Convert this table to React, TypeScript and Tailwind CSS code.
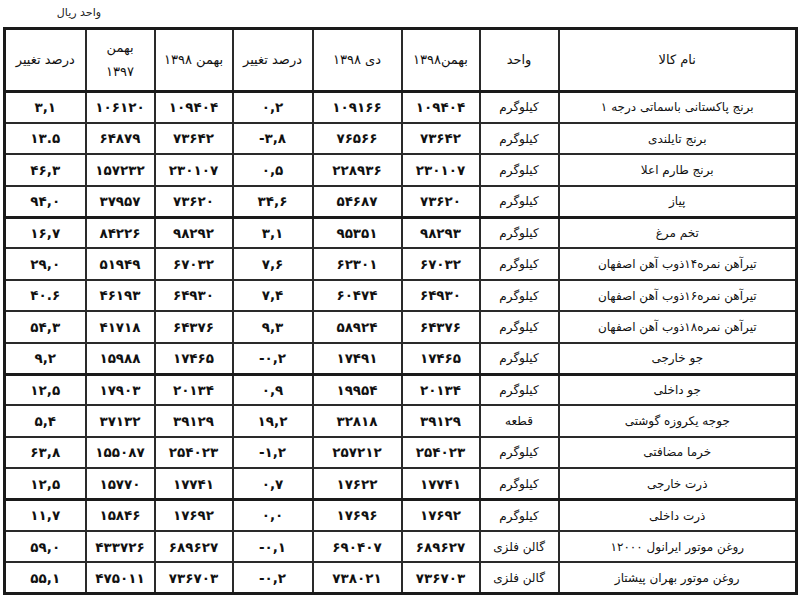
import React from "react";

type Row = [string, string, string, string, string, string, string, string];

const rows: Row[] = [
  ["برنج پاکستانی باسماتی درجه ۱", "کیلوگرم", "۱۰۹۴۰۴", "۱۰۹۱۶۶", "۰,۲", "۱۰۹۴۰۴", "۱۰۶۱۲۰", "۳,۱"],
  ["برنج تایلندی", "کیلوگرم", "۷۳۶۴۲", "۷۶۵۶۶", "-۳,۸", "۷۳۶۴۲", "۶۴۸۷۹", "۱۳.۵"],
  ["برنج طارم اعلا", "کیلوگرم", "۲۳۰۱۰۷", "۲۲۸۹۳۶", "۰,۵", "۲۳۰۱۰۷", "۱۵۷۲۳۲", "۴۶,۳"],
  ["پیاز", "کیلوگرم", "۷۳۶۲۰", "۵۴۶۸۷", "۳۴,۶", "۷۳۶۲۰", "۳۷۹۵۷", "۹۴,۰"],
  ["تخم مرغ", "کیلوگرم", "۹۸۲۹۳", "۹۵۳۵۱", "۳,۱", "۹۸۲۹۲", "۸۴۲۲۶", "۱۶,۷"],
  ["تیرآهن نمره۱۴ذوب آهن اصفهان", "کیلوگرم", "۶۷۰۳۲", "۶۲۳۰۱", "۷,۶", "۶۷۰۳۲", "۵۱۹۴۹", "۲۹,۰"],
  ["تیرآهن نمره۱۶ذوب آهن اصفهان", "کیلوگرم", "۶۴۹۳۰", "۶۰۴۷۴", "۷,۴", "۶۴۹۳۰", "۴۶۱۹۳", "۴۰.۶"],
  ["تیرآهن نمره۱۸ذوب آهن اصفهان", "کیلوگرم", "۶۴۳۷۶", "۵۸۹۲۴", "۹,۳", "۶۴۳۷۶", "۴۱۷۱۸", "۵۴,۳"],
  ["جو خارجی", "کیلوگرم", "۱۷۴۶۵", "۱۷۴۹۱", "-۰,۲", "۱۷۴۶۵", "۱۵۹۸۸", "۹,۲"],
  ["جو داخلی", "کیلوگرم", "۲۰۱۳۴", "۱۹۹۵۴", "۰,۹", "۲۰۱۳۴", "۱۷۹۰۳", "۱۲,۵"],
  ["جوجه یکروزه گوشتی", "قطعه", "۳۹۱۲۹", "۳۲۸۱۸", "۱۹,۲", "۳۹۱۲۹", "۳۷۱۳۲", "۵,۴"],
  ["خرما مضافتی", "کیلوگرم", "۲۵۴۰۲۳", "۲۵۷۲۱۲", "-۱,۲", "۲۵۴۰۲۳", "۱۵۵۰۸۷", "۶۳,۸"],
  ["ذرت خارجی", "کیلوگرم", "۱۷۷۴۱", "۱۷۶۲۲", "۰,۷", "۱۷۷۴۱", "۱۵۷۷۰", "۱۲,۵"],
  ["ذرت داخلی", "کیلوگرم", "۱۷۶۹۲", "۱۷۶۹۶", "۰,۰", "۱۷۶۹۲", "۱۵۸۴۶", "۱۱,۷"],
  ["روغن موتور ایرانول ۱۲۰۰۰", "گالن فلزی", "۶۸۹۶۲۷", "۶۹۰۴۰۷", "-۰,۱", "۶۸۹۶۲۷", "۴۳۳۷۲۶", "۵۹,۰"],
  ["روغن موتور بهران پیشتاز", "گالن فلزی", "۷۳۶۷۰۳", "۷۳۸۰۲۱", "-۰,۲", "۷۳۶۷۰۳", "۴۷۵۰۱۱", "۵۵,۱"],
];

const thickAfter = new Set([3, 8, 12]);

export default function App() {
  return (
    <div
      className="w-[800px] h-[600px] bg-white text-[#111] overflow-hidden"
      style={{ fontFamily: '"DejaVu Sans", sans-serif' }}
    >
      <div className="h-[27px] flex">
        <div className="w-[101px] flex justify-end items-start pt-[7px] text-[11px] leading-none text-[#222]">
          <span dir="rtl">واحد ریال</span>
        </div>
      </div>
      <table
        dir="rtl"
        className="ml-[3px] w-[794px] table-fixed border-collapse border-[3px] border-[#1a1a1a]"
      >
        <colgroup>
          <col className="w-[238px]" />
          <col className="w-[79px]" />
          <col className="w-[78px]" />
          <col className="w-[89px]" />
          <col className="w-[80px]" />
          <col className="w-[78px]" />
          <col className="w-[69px]" />
          <col className="w-[81px]" />
        </colgroup>
        <thead>
          <tr className="h-[63px] border-b-[3px] border-[#1a1a1a] text-[13px]">
            <th className="font-normal border-2 border-[#2a2a2a]">نام کالا</th>
            <th className="font-normal border-2 border-[#2a2a2a]">واحد</th>
            <th className="font-normal border-2 border-[#2a2a2a] tracking-tight">بهمن۱۳۹۸</th>
            <th className="font-normal border-2 border-[#2a2a2a]">دی ۱۳۹۸</th>
            <th className="font-normal border-2 border-[#2a2a2a]">درصد تغییر</th>
            <th className="font-normal border-2 border-[#2a2a2a]">بهمن ۱۳۹۸</th>
            <th className="font-normal border-2 border-[#2a2a2a] leading-[24px]">
              بهمن
              <br />
              ۱۳۹۷
            </th>
            <th className="font-normal border-2 border-[#2a2a2a]">درصد تغییر</th>
          </tr>
        </thead>
        <tbody>
          {rows.map((r, i) => (
            <tr
              key={i}
              className={
                "h-[31.4px] text-[12px] " +
                (thickAfter.has(i) ? "border-b-[3px] border-[#1a1a1a]" : "")
              }
            >
              <td className="border-2 border-[#2a2a2a] text-center p-0 text-[12px]">{r[0]}</td>
              <td className="border-2 border-[#2a2a2a] text-center p-0">{r[1]}</td>
              {r.slice(2).map((v, j) => (
                <td key={j} dir="ltr" className="border-2 border-[#2a2a2a] text-center p-0 font-bold text-[13.5px]">
                  {v}
                </td>
              ))}
            </tr>
          ))}
        </tbody>
      </table>
    </div>
  );
}
